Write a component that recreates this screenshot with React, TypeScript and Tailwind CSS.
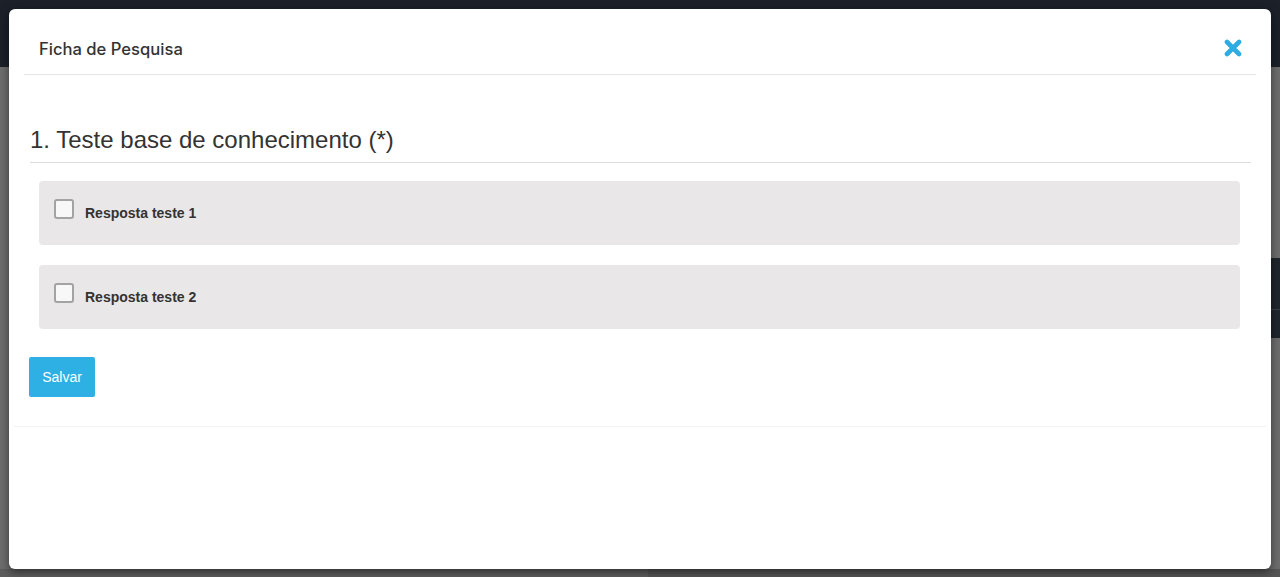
import React from "react";

const CloseIcon = () => (
  <svg width="18" height="18" viewBox="0 0 18 18" aria-hidden="true">
    <path d="M3 3 L15 15 M15 3 L3 15" stroke="#2dabe2" strokeWidth="4.6" strokeLinecap="round" />
  </svg>
);

const Option = ({ label }: { label: string }) => (
  <div className="flex h-[64px] items-center rounded-[4px] bg-[#e9e7e8] pl-[15px]">
    <span className="mb-[8px] h-[20px] w-[20px] rounded-[3px] border-2 border-[#a3a3a3] bg-[#f8f8f8]" />
    <span className="ml-[11px] text-[14px] font-bold text-[#333333]">{label}</span>
  </div>
);

export default function App() {
  return (
    <div className="relative h-[577px] w-full overflow-hidden bg-[#6c6c6c] font-['Liberation_Sans',Arial,sans-serif]">
      {/* page behind the overlay */}
      <div className="flex h-full flex-col">
        <div className="h-[67px] bg-[#1b2029]" />
        <div className="flex flex-1 flex-col items-end">
          <div className="mt-[191px] flex h-[80px] w-[12px] flex-col bg-[#1f252c]">
            <div className="h-[52px] border-b border-[#3a4047]" />
          </div>
        </div>
        <div className="flex h-[8px]">
          <div className="w-[648px] bg-[#5d5d5d]" />
          <div className="flex-1 bg-[#555555]" />
        </div>
      </div>

      {/* modal */}
      <div className="absolute inset-0 p-[9px] pb-[8px]">
        <div className="flex h-[560px] flex-col rounded-[6px] bg-white shadow-[0_3px_9px_rgba(0,0,0,0.5)]">
          <div className="mx-[15px] flex h-[66px] items-center justify-between border-b border-[#e5e5e5] px-[15px] pt-[15px]">
            <h4 className="font-['Inter',sans-serif] text-[16.6px] font-medium text-[#333333]">Ficha de Pesquisa</h4>
            <button className="mr-[-1px] mt-[-3px] flex items-center">
              <CloseIcon />
            </button>
          </div>

          <div className="px-[21px] pt-[52px]">
            <div className="mr-[-1px] border-b border-[#dddddd] pb-[9px]">
              <h3 className="text-[24px] leading-[26px] text-[#333333]">1. Teste base de conhecimento (*)</h3>
            </div>
            <div className="mx-[9px] mt-[18px] mr-[10px] flex flex-col gap-[20px]">
              <Option label="Resposta teste 1" />
              <Option label="Resposta teste 2" />
            </div>
            <button className="mt-[28px] ml-[-1px] h-[40px] w-[66px] rounded-[2px] bg-[#2eb0e4] text-[14px] text-white">
              Salvar
            </button>
          </div>

          <div className="mx-[5px] mt-[29px] border-t border-[#f4f4f4]" />
        </div>
      </div>
    </div>
  );
}
